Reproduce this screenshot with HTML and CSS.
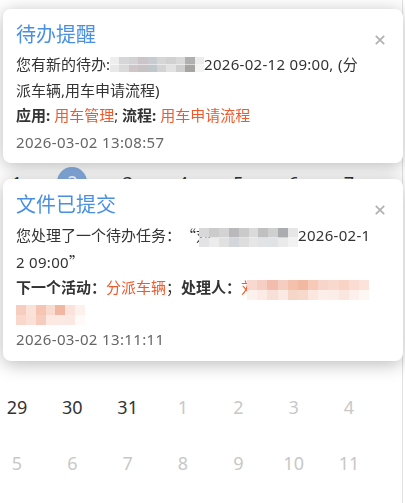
FILE: index.html
```html
<!DOCTYPE html>
<html lang="zh-CN">
<head>
<meta charset="utf-8">
<title>通知</title>
<link rel="stylesheet" href="styles.css">
</head>
<body>
<div class="calendar">
  <div class="cal-head"></div>
  <div class="cal-grid">
    <span class="day">1</span><span class="day selected">2</span><span class="day">3</span><span class="day">4</span><span class="day">5</span><span class="day">6</span><span class="day">7</span>
    <span class="day">8</span><span class="day">9</span><span class="day">10</span><span class="day">11</span><span class="day">12</span><span class="day">13</span><span class="day">14</span>
    <span class="day">15</span><span class="day">16</span><span class="day">17</span><span class="day">18</span><span class="day">19</span><span class="day">20</span><span class="day">21</span>
    <span class="day">22</span><span class="day">23</span><span class="day">24</span><span class="day">25</span><span class="day">26</span><span class="day">27</span><span class="day">28</span>
    <span class="day">29</span><span class="day">30</span><span class="day">31</span><span class="day other">1</span><span class="day other">2</span><span class="day other">3</span><span class="day other">4</span>
    <span class="day other">5</span><span class="day other">6</span><span class="day other">7</span><span class="day other">8</span><span class="day other">9</span><span class="day other">10</span><span class="day other">11</span>
  </div>
</div>

<div class="notices">
  <div class="notice">
    <div class="notice-head">
      <h2 class="notice-title">待办提醒</h2>
      <button class="notice-close" aria-label="关闭"><svg viewBox="0 0 10 10" width="10" height="10"><path d="M0.8 0.8L9.2 9.2M9.2 0.8L0.8 9.2" stroke="#b0b0b0" stroke-width="1.7" fill="none"/></svg></button>
    </div>
    <div class="notice-body">
      <p>您有新的待办:<span class="mosaic mz-a"></span><span class="num">2026-02-12 09:00, (</span>分<br>派车辆,用车申请流程)</p>
      <p><b>应用:</b> <span class="hl">用车管理</span>; <b>流程:</b> <span class="hl">用车申请流程</span></p>
      <p class="notice-time">2026-03-02 13:08:57</p>
    </div>
  </div>

  <div class="notice">
    <div class="notice-head">
      <h2 class="notice-title">文件已提交</h2>
      <button class="notice-close" aria-label="关闭"><svg viewBox="0 0 10 10" width="10" height="10"><path d="M0.8 0.8L9.2 9.2M9.2 0.8L0.8 9.2" stroke="#b0b0b0" stroke-width="1.7" fill="none"/></svg></button>
    </div>
    <div class="notice-body">
      <p>您处理了一个待办任务：<span class="q q-open">“</span>刘<span class="mosaic mz-b"></span><span class="num">2026-02-1</span><br><span class="num">2 09:00</span><span class="q">”</span></p>
      <p><b>下一个活动：</b><span class="hl">分派车辆</span>；<b>处理人：</b><span class="hl">刘</span><span class="mosaic mz-c"></span><br><span class="mosaic mz-d"></span></p>
      <p class="notice-time">2026-03-02 13:11:11</p>
    </div>
  </div>
</div>
</body>
</html>
```
FILE: styles.css
```css
* {
  box-sizing: border-box;
}

html,
body {
  margin: 0;
  background: #ffffff;
}

body {
  width: 405px;
  height: 503px;
  overflow: hidden;
  font-family: "Noto Sans", "Noto Sans CJK SC", sans-serif;
  color: #333333;
}

/* ---------- calendar underneath ---------- */
.calendar {
  width: 403px;
  height: 503px;
  border-right: 1px solid #e2e2e2;
}

.cal-head {
  height: 155px;
}

.cal-grid {
  display: grid;
  grid-template-columns: repeat(7, 34px);
  grid-auto-rows: 56px;
  column-gap: 21.33px;
  align-items: center;
  justify-items: center;
}

.day {
  width: 30px;
  height: 30px;
  line-height: 30px;
  text-align: center;
  font-size: 18px;
  color: #333333;
}

.day.other {
  color: #c8c8c8;
}

.day.selected {
  border-radius: 50%;
  background: #86afe4;
  color: #ffffff;
  margin-top: -3px;
}

/* ---------- notifications ---------- */
.notices {
  position: fixed;
  top: 9px;
  left: 3px;
  width: 400px;
  display: flex;
  flex-direction: column;
  gap: 16px;
}

.notice {
  background: #ffffff;
  border-radius: 8px;
  box-shadow: 0 3px 18px rgba(0, 0, 0, 0.28);
  padding: 10px 18px 8px 13px;
}

.notice-head {
  display: flex;
  justify-content: space-between;
  align-items: flex-start;
}

.notice-title {
  margin: 0;
  font-family: "Noto Sans CJK SC", sans-serif;
  font-size: 20px;
  line-height: 30px;
  font-weight: 400;
  color: #4a90e2;
}

.notice-close {
  width: 10px;
  height: 10px;
  margin-top: 16px;
  padding: 0;
  border: 0;
  background: none;
  display: block;
}

.notice-close svg {
  display: block;
}

.notice-body {
  margin-top: 3px;
  font-size: 15px;
  line-height: 25.5px;
}

.notice-body p {
  margin: 0;
  white-space: nowrap;
}

.notice-body b {
  font-weight: 700;
  color: #333333;
}

.num {
  letter-spacing: 0.3px;
}

.notice-body .notice-time {
  margin-top: 1px;
  color: #666666;
  letter-spacing: 0.35px;
}

.hl {
  color: #f2582a;
}

.q {
  font-family: "Noto Sans CJK SC", sans-serif;
}

.q-open {
  display: inline-block;
  width: 15px;
  text-align: right;
}

/* pixelated (masked) personal data */
.mosaic {
  display: inline-block;
}

.mz-a {
  width: 94px;
  height: 15px;
  vertical-align: -2px;
  background:
    linear-gradient(to right, #eeeeee 0 10%, #d6d6d8 10% 20%, #d2d2d5 20% 30%, #cbc4c8 30% 40%, #c8cbcf 40% 50%, #d6d6d6 50% 60%, #d1d1d1 60% 70%, #d9d9d9 70% 80%, #b1b0ae 80% 90%, #ececec 90% 100%) top / 100% 50% no-repeat,
    linear-gradient(to right, #e8e8e8 0 10%, #dadada 10% 20%, #cfc4c6 20% 30%, #c7c3c5 30% 40%, #bfc7cb 40% 50%, #d3d3d3 50% 60%, #e2e2e2 60% 70%, #cfcfcf 70% 80%, #a6a5a2 80% 90%, #f4f4f4 90% 100%) bottom / 100% 50% no-repeat;
}

.mz-b {
  width: 99px;
  height: 19px;
  margin-left: -12px;
  vertical-align: -6px;
  background:
    linear-gradient(to right, #d8d8da 0 10%, #cbcbcb 10% 20%, #d3d3d3 20% 30%, #b9b9bb 30% 40%, #cacaca 40% 50%, #dadada 50% 60%, #c0c0c0 60% 70%, #cfcfcf 70% 80%, #abacaf 80% 90%, #e6e6e6 90% 100%) top / 100% 50% no-repeat,
    linear-gradient(to right, #e3e3e5 0 10%, #ececec 10% 20%, #e1e1e1 20% 30%, #d3d7db 30% 40%, #dddddd 40% 50%, #e6e6e6 50% 60%, #e1e3e5 60% 70%, #dfe3e6 70% 80%, #eaeaea 80% 90%, #f2f2f2 90% 100%) bottom / 100% 50% no-repeat;
}

.mz-c {
  width: 122px;
  height: 20px;
  margin-left: -9px;
  vertical-align: -6.5px;
  background:
    linear-gradient(to right, #f9d8cf 0 8.33%, #f6cfc4 8.33% 16.67%, #f3bdae 16.67% 25%, #f6cdc1 25% 33.33%, #f4c1ad 33.33% 41.67%, #f2b9a2 41.67% 50%, #f6c9b9 50% 58.33%, #f8d5ca 58.33% 66.67%, #f9d9ce 66.67% 75%, #f8d3c6 75% 83.33%, #fadcd2 83.33% 91.67%, #fbe3db 91.67% 100%) top / 100% 50% no-repeat,
    linear-gradient(to right, #fdf1ed 0 8.33%, #fcebe5 8.33% 16.67%, #f8e0d8 16.67% 25%, #fbe9e3 25% 33.33%, #f6d6c7 33.33% 41.67%, #f7d9cb 41.67% 50%, #fbe7e0 50% 58.33%, #fceee9 58.33% 66.67%, #fcede8 66.67% 75%, #fbe6df 75% 83.33%, #fdf0ec 83.33% 91.67%, #fef6f3 91.67% 100%) bottom / 100% 50% no-repeat;
}

.mz-d {
  width: 69px;
  height: 20px;
  vertical-align: -6.5px;
  background:
    linear-gradient(to right, #f7cdbf 0 14.29%, #fbe2d9 14.29% 28.57%, #f5c4b3 28.57% 42.86%, #f9dacf 42.86% 57.14%, #f2b7a3 57.14% 71.43%, #fbe3db 71.43% 85.71%, #fdf1ed 85.71% 100%) top / 100% 50% no-repeat,
    linear-gradient(to right, #f9d7cb 0 14.29%, #fae0d6 14.29% 28.57%, #f6ccbe 28.57% 42.86%, #fde8e2 42.86% 57.14%, #fbe9e3 57.14% 71.43%, #fce8e2 71.43% 85.71%, #fffaf8 85.71% 100%) bottom / 100% 50% no-repeat;
}
```
